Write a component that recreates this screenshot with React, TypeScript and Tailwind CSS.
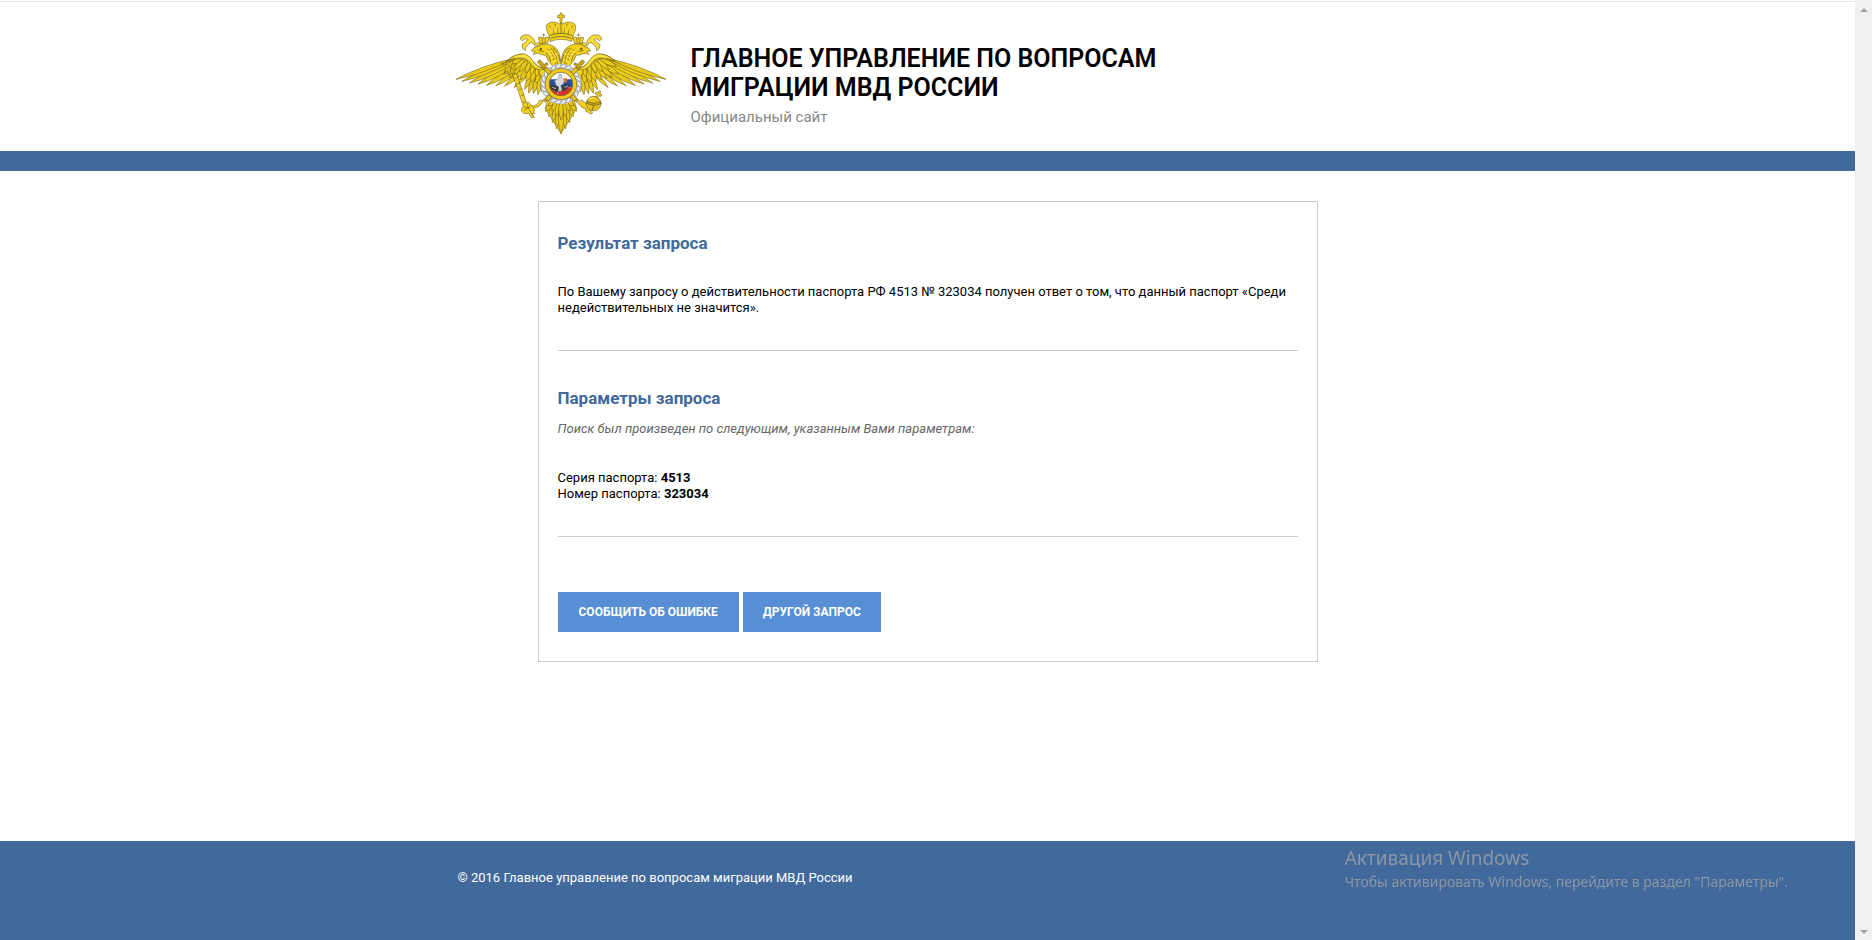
import type { ReactNode } from "react";

type Feather = [x1: number, y1: number, x2: number, y2: number, width: number];

const primaries: Feather[] = [
  [258, 205, 204, 262, 12],
  [246, 200, 176, 258, 13],
  [236, 196, 150, 257, 14],
  [228, 192, 122, 256, 15],
  [220, 187, 96, 252, 15],
  [212, 183, 70, 249, 15],
  [206, 179, 48, 244, 14],
  [204, 175, 30, 238, 13],
];

const secondaries: Feather[] = [
  [262, 215, 236, 268, 13],
  [268, 218, 248, 279, 13],
  [276, 222, 262, 281, 13],
  [284, 226, 276, 284, 13],
  [292, 228, 288, 276, 13],
];

const coverts: Feather[] = [
  [236, 186, 172, 222, 15],
  [240, 188, 190, 232, 15],
  [246, 192, 208, 236, 15],
  [252, 196, 224, 240, 15],
  [260, 200, 240, 244, 15],
  [268, 206, 256, 248, 14],
  [278, 212, 272, 250, 14],
  [232, 174, 178, 200, 13],
  [240, 174, 200, 210, 13],
  [246, 178, 220, 216, 13],
  [254, 184, 238, 220, 13],
  [262, 192, 256, 226, 12],
  [274, 202, 272, 230, 12],
];

const tail: Feather[] = [
  [330, 296, 298, 334, 14],
  [334, 298, 308, 350, 14],
  [338, 300, 319, 368, 14],
  [342, 302, 331, 386, 14],
  [334, 294, 306, 318, 13],
  [336, 296, 318, 334, 13],
  [340, 298, 330, 350, 13],
];

function lens([x1, y1, x2, y2, w]: Feather) {
  const dx = x2 - x1;
  const dy = y2 - y1;
  const len = Math.hypot(dx, dy);
  const nx = (-dy / len) * w;
  const ny = (dx / len) * w;
  const mx = x1 + dx * 0.55;
  const my = y1 + dy * 0.55;
  return `M${x1} ${y1}Q${mx + nx} ${my + ny} ${x2} ${y2}Q${mx - nx} ${my - ny} ${x1} ${y1}Z`;
}

function Feathers({ items }: { items: Feather[] }) {
  return (
    <>
      {items.map((f, i) => (
        <g key={i}>
          <path d={lens(f)} />
          <path d={`M${f[0]} ${f[1]}L${f[2]} ${f[3]}`} stroke="#c9a60c" strokeWidth="1.2" />
        </g>
      ))}
    </>
  );
}

function Mirror({ children }: { children: ReactNode }) {
  return (
    <>
      {children}
      <g transform="translate(690 0) scale(-1 1)">{children}</g>
    </>
  );
}

const wreath = Array.from({ length: 22 }, (_, i) => (i * Math.PI * 2) / 22);

function Emblem() {
  return (
    <svg
      viewBox="30 36 630 369"
      className="h-[123px] w-[210px] shrink-0"
      role="img"
      aria-label="Эмблема МВД России"
    >
      <g fill="#f2d21c" stroke="#6e5f1c" strokeWidth="1.8" strokeLinejoin="round" strokeLinecap="round">
        <Mirror>
          <path d="M300 262L262 240L196 212L186 180Q205 162 232 162Q248 166 262 186Q280 206 302 204Z" />
          <Feathers items={primaries} />
          <Feathers items={secondaries} />
          <Feathers items={coverts} />
          <path d="M184 182Q206 160 238 162Q252 167 264 188Q276 204 296 208Q274 214 258 196Q244 174 226 174Q204 172 184 182Z" fill="#f8e03c" />
        </Mirror>

        <path d="M306 300L384 300L392 326L345 400L298 326Z" />
        <Mirror>
          <Feathers items={tail} />
        </Mirror>
        <Feathers items={[[345, 300, 345, 402, 16], [345, 294, 345, 360, 14]]} />

        <Mirror>
          <path d="M300 134Q282 122 268 132Q266 112 248 105Q228 102 222 116L230 122Q240 112 246 118Q238 128 228 134Q226 146 238 152Q236 142 248 132Q256 124 262 130Q264 138 270 138Q284 132 300 138Z" fill="#f6dc38" />
          <path d="M318 196Q302 180 300 166Q286 166 276 160Q266 160 262 164Q263 158 268 155L256 152Q262 141 276 139Q284 130 300 132Q326 134 338 156Q346 176 344 212L322 208Z" />
          <path d="M306 148Q322 160 324 180M314 144Q332 160 334 190M300 158Q312 168 314 184M322 144Q340 160 342 184M328 190L332 204M278 152L292 154" fill="none" strokeWidth="2.2" />
          <path d="M306 154L318 156M310 164L322 162M318 174L328 170M324 184L336 180M328 164L336 160" fill="none" stroke="#fff07a" strokeWidth="2.5" />
          <circle cx="284" cy="147" r="2.6" fill="#2f2a12" />
          <path d="M282 131L277 113Q286 108 293 116Q300 108 310 113L304 131Q293 126 282 131Z" />
          <path d="M293 101V114M289 105H297M288 116L289 128M298 116L297 128" fill="none" />
          <path d="M274 186L281 179L294 193L304 188L306 194L298 200L302 208L296 212L287 200Z" fill="#c79f14" />
          <path d="M292 300L306 290L310 296L298 306Z" fill="#c79f14" />
        </Mirror>

        <path d="M313 124L308 104Q296 82 304 72Q322 60 340 72L345 68L350 72Q368 60 386 72Q394 82 382 104L377 124Q345 112 313 124Z" />
        <path d="M312 106Q345 94 378 106M310 78Q322 84 324 100M326 72Q336 82 336 98M345 68V98M364 72Q354 82 354 98M380 78Q368 84 366 100M316 114Q345 104 374 114" fill="none" strokeWidth="2.4" />
        <path d="M317 82L320 94M331 78L333 92M373 82L370 94M359 78L357 92" fill="none" stroke="#fff07a" strokeWidth="2.5" />
        <path d="M342 68V53H335V46H342V39H348V46H355V53H348V68Z" />

        <path d="M200 222L211 219L240 304L230 309Z" />
        <path d="M168 190L182 194L181 182L191 188L198 180L201 192L211 190L206 201L213 209L204 212L207 224L196 219L189 226L186 215L175 216L180 205Z" fill="#dfb915" />
        <path d="M185 197L203 208M198 192L192 216" fill="none" />
        <path d="M206 236L216 232M212 252L222 248M218 270L228 266M224 288L234 284" fill="none" />
        <path d="M292 302Q280 326 262 322Q270 332 262 336L266 342L257 340L265 352L256 353L248 340Q234 344 228 334Q222 326 232 320Q226 310 238 307Q252 304 256 318Q276 318 280 302Z" />
        <path d="M234 320L250 326M236 330L252 320M250 330L260 346M244 310L246 322" fill="none" />

        <path d="M396 308Q404 324 420 326Q414 334 426 337Q436 346 440 338Q430 334 430 326L424 314L408 300Z" />
        <circle cx="443" cy="311" r="22" fill="#e3c01a" />
        <path d="M422 304Q444 316 465 304M422 309Q444 322 465 310M443 317L438 332" fill="none" strokeWidth="2.6" />
        <path d="M430 296Q442 290 454 296" fill="none" stroke="#fff07a" strokeWidth="3" />
        <path d="M450 292L454 284L447 281L450 276L456 279L459 272L464 274L462 281L468 284L465 289L459 287L456 294Z" />
      </g>

      <circle cx="345" cy="252" r="52" fill="none" stroke="#cdd0d8" strokeWidth="17" />
      <g fill="#f4f5f8" stroke="#858b98" strokeWidth="1.8">
        {wreath.map((a, i) => (
          <ellipse
            key={i}
            cx="0"
            cy="0"
            rx="9"
            ry="4.5"
            transform={`translate(${345 + 54 * Math.cos(a)} ${252 + 54 * Math.sin(a)}) rotate(${(a * 180) / Math.PI + 55})`}
          />
        ))}
      </g>
      <g stroke="#6e5f1c" strokeWidth="2" fill="#e6c21a">
        <Mirror>
          <path d="M294 208L303 202L316 216L307 224Z" />
          <path d="M297 296L306 304L317 291L309 284Z" />
        </Mirror>
      </g>
      <circle cx="345" cy="252" r="41" fill="none" stroke="#7c6614" strokeWidth="13" />
      <circle cx="345" cy="252" r="41" fill="none" stroke="#f0c81e" strokeWidth="10" />
      <clipPath id="shield">
        <circle cx="345" cy="252" r="35" />
      </clipPath>
      <g clipPath="url(#shield)">
        <path fill="#fff" d="M305 210H385V238H305Z" />
        <path fill="#2452a8" d="M305 238H385V262H305Z" />
        <path fill="#d6332c" d="M305 262H385V292H305Z" />
        <path fill="#3c3d40" d="M310 258L322 252L330 260L338 254L350 262L362 250L372 256L364 264L356 274L346 270L338 280L326 272L314 268Z" />
        <path fill="#d4d6da" stroke="#77797f" strokeWidth="1.5" d="M326 242L336 236L340 222L347 224L346 234L356 240L352 252L344 256L348 270L340 276L338 260L330 256Z" />
        <path fill="#e8661f" d="M352 236L362 234L364 246L356 248Z" />
        <path fill="none" stroke="#e9eaec" strokeWidth="2" d="M352 224L334 284M318 262L330 266M356 262L366 258" />
      </g>
      <circle cx="345" cy="252" r="35" fill="none" stroke="#7c6614" strokeWidth="2" />
    </svg>
  );
}

function ScrollRail() {
  return (
    <div className="flex w-[17px] shrink-0 flex-col items-center justify-between bg-[#f0f0f0] pt-2 pb-1.5" aria-hidden="true">
      <svg viewBox="0 0 8 4" className="h-1 w-2">
        <path d="M0 4L4 0L8 4Z" fill="#a3a3a3" />
      </svg>
      <svg viewBox="0 0 8 4" className="h-1 w-2">
        <path d="M0 0L4 4L8 0Z" fill="#a3a3a3" />
      </svg>
    </div>
  );
}

export default function App() {
  return (
    <div className="flex min-h-screen bg-white font-[Roboto,'Liberation_Sans',sans-serif] text-black">
      <div className="flex min-w-0 grow flex-col">
        <header className="border-b-20 border-[#41699b]">
          <div className="mt-px border-t border-[#e5e5e5]">
            <div className="mx-auto flex h-[149px] max-w-[944px] items-start gap-[25px] pt-[10px]">
              <Emblem />
              <div className="pt-8">
                <h1 className="max-w-[500px] text-[25px] leading-[29px] font-semibold">
                  ГЛАВНОЕ УПРАВЛЕНИЕ ПО ВОПРОСАМ МИГРАЦИИ МВД РОССИИ
                </h1>
                <p className="mt-[5px] text-[15px] leading-5 text-[#888]">Официальный сайт</p>
              </div>
            </div>
          </div>
        </header>

        <main className="grow px-4 pt-[30px] pb-10">
          <section className="mx-auto max-w-[780px] border border-[#ccc] px-[19px] pt-[29px] pb-[29px]">
            <h2 className="text-[17px] leading-6 font-bold text-[#41699b]">Результат запроса</h2>
            <p className="mt-[29px] text-[13px] leading-4">
              По Вашему запросу о действительности паспорта РФ 4513 № 323034 получен ответ о том, что данный паспорт «Среди
              недействительных не значится».
            </p>
            <hr className="mt-[34px] border-[#ccc]" />
            <h2 className="mt-[35px] text-[17px] leading-6 font-bold text-[#41699b]">Параметры запроса</h2>
            <p className="mt-[11px] text-[13px] leading-4 text-[#666] italic">
              Поиск был произведен по следующим, указанным Вами параметрам:
            </p>
            <p className="mt-[33px] text-[13px] leading-4">
              Серия паспорта: <b>4513</b>
              <br />
              Номер паспорта: <b>323034</b>
            </p>
            <hr className="mt-[34px] border-[#ccc]" />
            <div className="mt-[55px] flex flex-wrap gap-1">
              <button type="button" className="h-10 bg-[#588ed4] px-[21px] text-[12px] font-bold text-white">
                СООБЩИТЬ ОБ ОШИБКЕ
              </button>
              <button type="button" className="h-10 bg-[#588ed4] px-5 text-[12px] font-bold text-white">
                ДРУГОЙ ЗАПРОС
              </button>
            </div>
          </section>
        </main>

        <footer className="h-[99px] bg-[#41699b]">
          <p className="mx-auto max-w-[940px] pt-[29px] text-[13px] leading-4 text-white">
            © 2016 Главное управление по вопросам миграции МВД России
          </p>
        </footer>
      </div>
      <ScrollRail />
      <aside className="pointer-events-none fixed right-[84px] bottom-12 font-['Noto_Sans',sans-serif] text-[#8b96a5]">
        <p className="text-[19px] leading-7">Активация Windows</p>
        <p className="text-[14px] leading-5">Чтобы активировать Windows, перейдите в раздел "Параметры".</p>
      </aside>
    </div>
  );
}
